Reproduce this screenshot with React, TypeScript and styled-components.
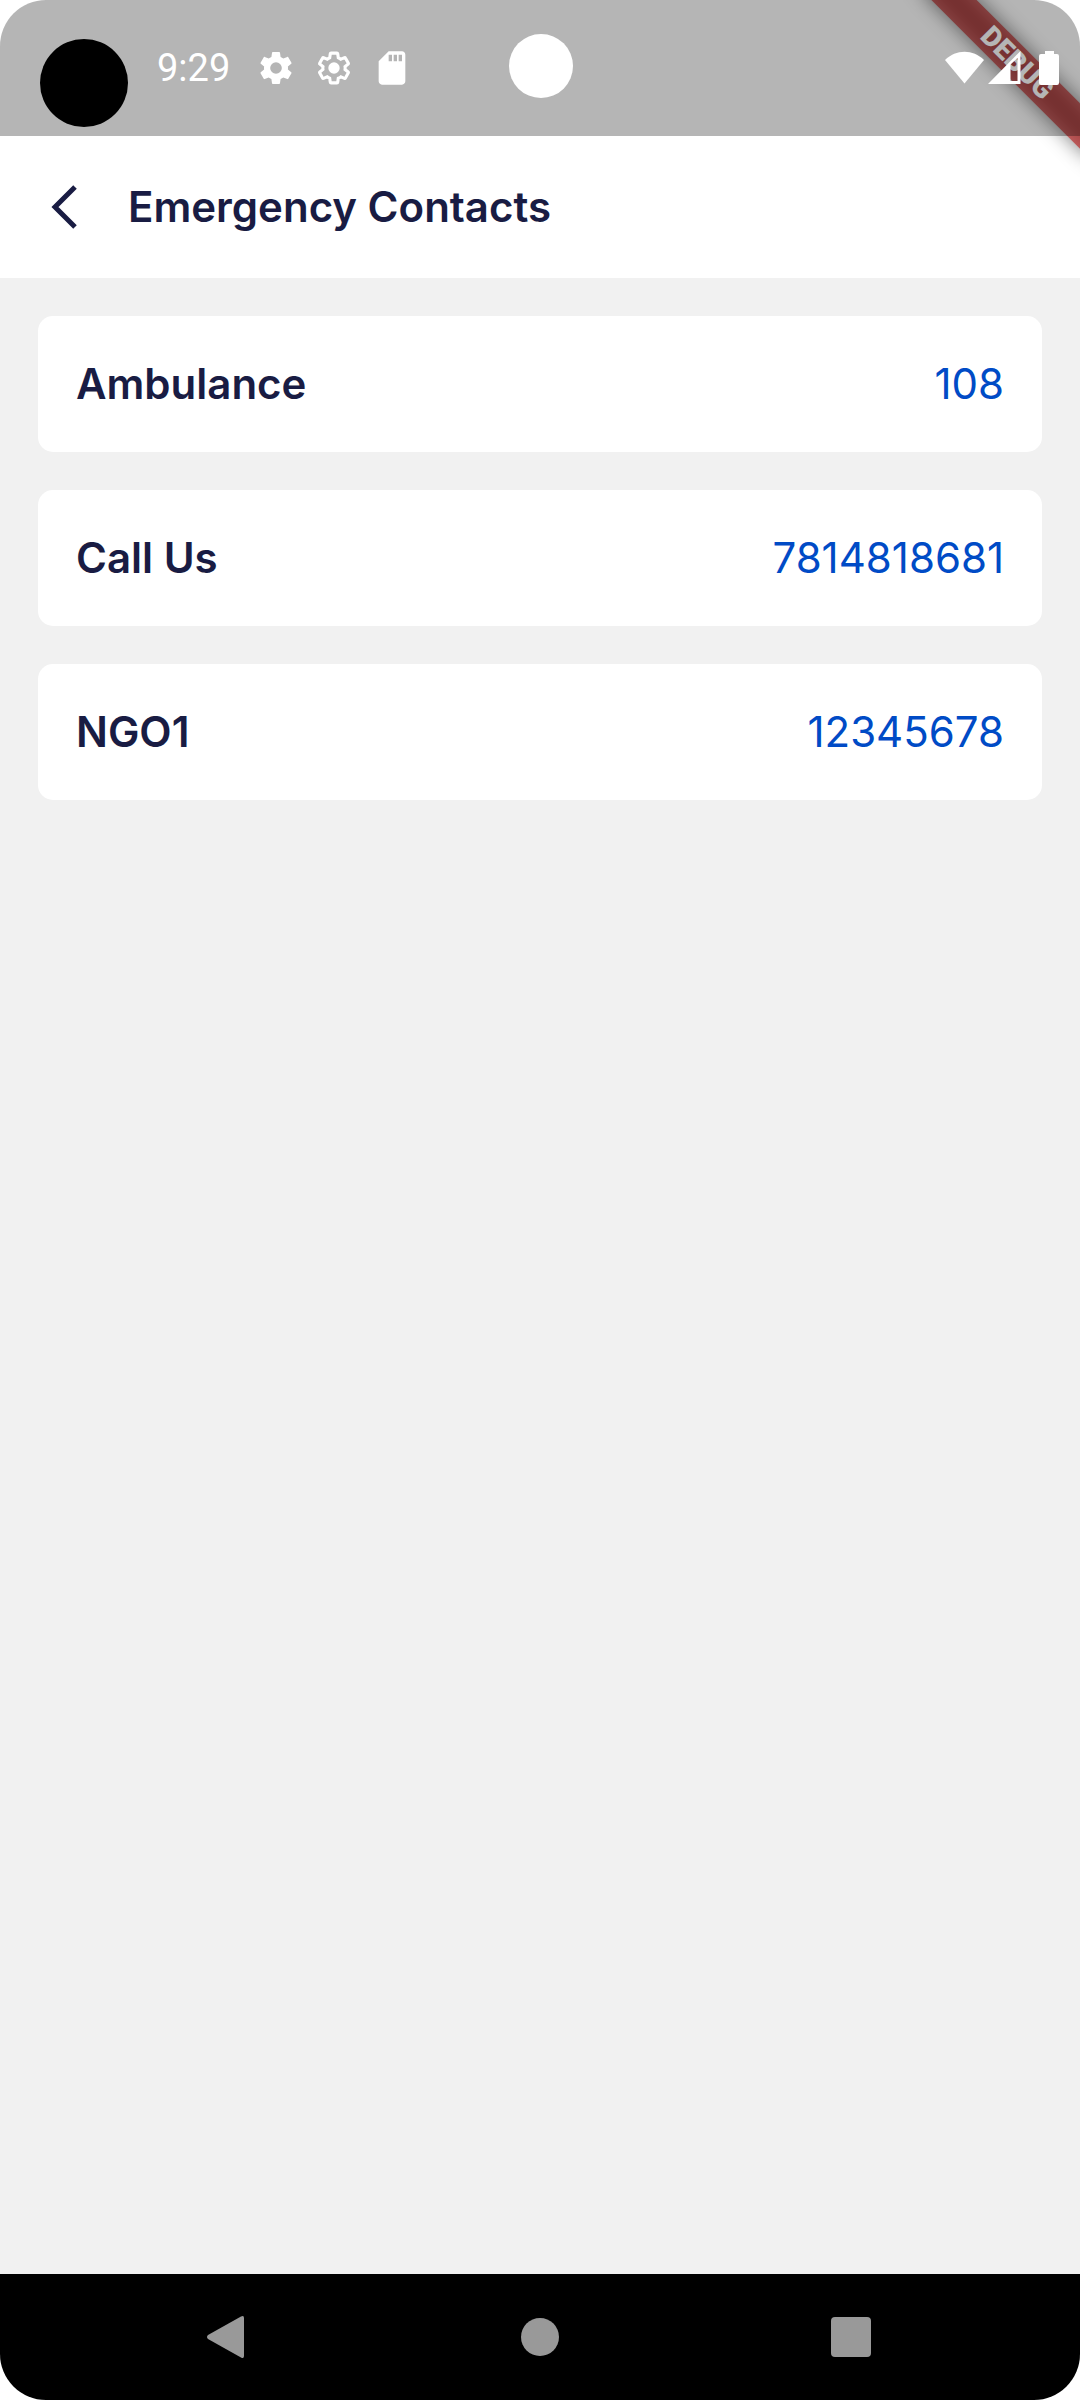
import React from "react";
import styled, { createGlobalStyle } from "styled-components";

const GlobalStyle = createGlobalStyle`
  *, *::before, *::after { box-sizing: border-box; }
  body { margin: 0; background: #ffffff; }
  button { border: 0; padding: 0; background: none; cursor: pointer; }
`;

const Phone = styled.div`
  position: relative;
  display: flex;
  flex-direction: column;
  min-height: 100vh;
  overflow: hidden;
  border-radius: 46px;
  background: #ffffff;
  font-family: Inter, "Liberation Sans", sans-serif;
  color: #191c43;
`;

const StatusBar = styled.header`
  position: relative;
  z-index: 2;
  display: flex;
  align-items: center;
  justify-content: space-between;
  height: 136px;
  padding: 0 20px 0 157px;
  background: rgba(0, 0, 0, 0.29);
  color: #ffffff;
`;

const StatusGroup = styled.div<{ $gap: number }>`
  display: flex;
  align-items: center;
  gap: ${(p) => p.$gap}px;
`;

const Clock = styled.time`
  margin-right: 8px;
  font: 400 38px/44px Roboto, "Liberation Sans", sans-serif;
`;

const CameraHole = styled.span`
  position: absolute;
  top: 39px;
  left: 40px;
  width: 88px;
  height: 88px;
  border-radius: 50%;
  background: #000000;
`;

const SensorDot = styled.span`
  position: absolute;
  top: 34px;
  left: calc(50% - 31px);
  width: 64px;
  height: 64px;
  border-radius: 50%;
  background: #ffffff;
`;

const DebugRibbon = styled.div`
  position: absolute;
  z-index: 1;
  top: 47px;
  right: -57px;
  width: 240px;
  height: 32px;
  transform: rotate(45deg);
  color: #ffffff;
  text-align: center;
  font: 900 28px/32px Roboto, "Liberation Sans", sans-serif;

  &::before {
    content: "";
    position: absolute;
    z-index: -1;
    inset: 0;
    background: rgba(0, 0, 0, 0.5);
    filter: blur(10px);
  }
`;

const RibbonBand = styled.span`
  display: block;
  background: rgba(183, 28, 28, 0.63);
`;

const AppBar = styled.div`
  display: flex;
  align-items: center;
  gap: 36px;
  height: 142px;
  padding: 0 36px;
  background: #ffffff;
`;

const BackButton = styled.button`
  display: flex;
  align-items: center;
  justify-content: center;
  width: 56px;
  height: 56px;
  color: inherit;
`;

const Title = styled.h1`
  margin: 0;
  font-size: 42px;
  font-weight: 600;
  line-height: 48px;
`;

const Content = styled.main`
  flex: 1;
  padding: 38px;
  background: #f1f1f1;
`;

const ContactList = styled.ul`
  display: flex;
  flex-direction: column;
  gap: 38px;
  margin: 0;
  padding: 0;
  list-style: none;
`;

const ContactCard = styled.li`
  display: flex;
  align-items: center;
  justify-content: space-between;
  padding: 44px 38px;
  border-radius: 15px;
  background: #ffffff;
  font-size: 42px;
  line-height: 48px;
`;

const ContactName = styled.span`
  font-weight: 600;
`;

const ContactNumber = styled.a`
  color: #004bc6;
  text-decoration: none;
`;

const NavBar = styled.nav`
  display: grid;
  grid-template-columns: repeat(3, 1fr);
  height: 126px;
  padding: 0 73px;
  background: #000000;
`;

const NavButton = styled.button`
  display: flex;
  align-items: center;
  justify-content: center;
  color: #999999;
`;

const GEAR =
  "M19.14 12.94c.04-.3.06-.61.06-.94 0-.32-.02-.64-.07-.94l2.03-1.58c.18-.14.23-.41.12-.61l-1.92-3.32c-.12-.22-.37-.29-.59-.22l-2.39.96c-.5-.38-1.03-.7-1.62-.94l-.36-2.54c-.04-.24-.24-.41-.48-.41h-3.84c-.24 0-.43.17-.47.41l-.36 2.54c-.59.24-1.13.57-1.62.94l-2.39-.96c-.22-.08-.47 0-.59.22L2.74 8.87c-.12.21-.08.47.12.61l2.03 1.58c-.05.3-.09.63-.09.94s.02.64.07.94l-2.03 1.58c-.18.14-.23.41-.12.61l1.92 3.32c.12.22.37.29.59.22l2.39-.96c.5.38 1.03.7 1.62.94l.36 2.54c.05.24.24.41.48.41h3.84c.24 0 .44-.17.47-.41l.36-2.54c.59-.24 1.13-.56 1.62-.94l2.39.96c.22.08.47 0 .59-.22l1.92-3.32c.12-.22.07-.47-.12-.61l-2.01-1.58z";

const GearFilled = () => (
  <svg width="40" height="40" viewBox="0 0 24 24" fill="currentColor" aria-hidden="true">
    <path fillRule="evenodd" d={GEAR + "M12 15.5a3.5 3.5 0 1 1 0-7 3.5 3.5 0 0 1 0 7z"} />
  </svg>
);

const GearOutlined = () => (
  <svg width="40" height="40" viewBox="0 0 24 24" fill="currentColor" aria-hidden="true">
    <path
      d={GEAR}
      fill="none"
      stroke="currentColor"
      strokeWidth="2"
      transform="translate(12 12) scale(0.93) translate(-12 -12)"
    />
    <circle cx="12" cy="12" r="3.4" />
  </svg>
);

const SdCard = () => (
  <svg width="40" height="40" viewBox="0 0 24 24" fill="currentColor" aria-hidden="true">
    <path d="M18 2h-8L4 8v12c0 1.1.9 2 2 2h12c1.1 0 2-.9 2-2V4c0-1.1-.9-2-2-2zm-6 6h-2V4h2v4zm3 0h-2V4h2v4zm3 0h-2V4h2v4z" />
  </svg>
);

const Wifi = () => (
  <svg width="39" height="34" viewBox="0 0 39 34" fill="currentColor" aria-hidden="true">
    <path d="M0 9C11-2 28-2 39 9L19.500 32.500z" />
  </svg>
);

const Signal = () => (
  <svg width="33" height="34" viewBox="0 0 33 34" fill="currentColor" aria-hidden="true">
    <path fillRule="evenodd" d="M0 33 32.500 0V33zM22.500 13.500V30H29.500V7z" />
  </svg>
);

const Battery = () => (
  <svg width="35" height="34" viewBox="0 0 35 34" fill="currentColor" aria-hidden="true">
    <path d="M20 0h9v3h3q2 0 2 2v27q0 2-2 2H16q-2 0-2-2V5q0-2 2-2h4z" />
  </svg>
);

const contacts = [
  { name: "Ambulance", number: "108" },
  { name: "Call Us", number: "7814818681" },
  { name: "NGO1", number: "12345678" },
];

export default function App() {
  return (
    <>
      <GlobalStyle />
      <Phone>
        <StatusBar>
          <CameraHole />
          <SensorDot />
          <StatusGroup $gap={18}>
            <Clock>9:29</Clock>
            <GearFilled />
            <GearOutlined />
            <SdCard />
          </StatusGroup>
          <StatusGroup $gap={4}>
            <Wifi />
            <Signal />
            <Battery />
          </StatusGroup>
        </StatusBar>
        <DebugRibbon>
          <RibbonBand>DEBUG</RibbonBand>
        </DebugRibbon>
        <AppBar>
          <BackButton type="button" aria-label="Back">
            <svg width="26" height="44" viewBox="0 0 26 44" fill="none" aria-hidden="true">
              <path d="M24 2 4 22 24 42" stroke="currentColor" strokeWidth="5" />
            </svg>
          </BackButton>
          <Title>Emergency Contacts</Title>
        </AppBar>
        <Content>
          <ContactList>
            {contacts.map((contact) => (
              <ContactCard key={contact.name}>
                <ContactName>{contact.name}</ContactName>
                <ContactNumber href={`tel:${contact.number}`}>{contact.number}</ContactNumber>
              </ContactCard>
            ))}
          </ContactList>
        </Content>
        <NavBar>
          <NavButton type="button" aria-label="Back">
            <svg width="46" height="44" viewBox="0 0 46 44" fill="currentColor" aria-hidden="true">
              <path d="M35 1.500Q38 0 38 3V41Q38 44 35 42.500L2 24Q0 22 2 20z" />
            </svg>
          </NavButton>
          <NavButton type="button" aria-label="Home">
            <svg width="40" height="40" viewBox="0 0 40 40" fill="currentColor" aria-hidden="true">
              <circle cx="20" cy="20" r="19" />
            </svg>
          </NavButton>
          <NavButton type="button" aria-label="Recent apps">
            <svg width="40" height="40" viewBox="0 0 40 40" fill="currentColor" aria-hidden="true">
              <rect width="40" height="40" rx="4" />
            </svg>
          </NavButton>
        </NavBar>
      </Phone>
    </>
  );
}
